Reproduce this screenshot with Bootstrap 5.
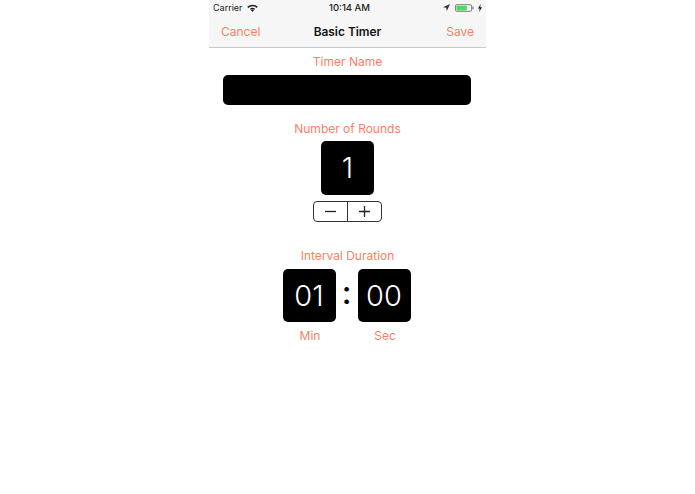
<!DOCTYPE html>
<html lang="en">
<head>
<meta charset="utf-8">
<title>Basic Timer</title>
<link rel="stylesheet" href="https://cdn.jsdelivr.net/npm/bootstrap@5.3.0/dist/css/bootstrap.min.css">
<style>
html,body{height:100%;background:#fff;font-family:Inter,"Liberation Sans",sans-serif;overflow:hidden}
.phone-col{width:277px}
.top-area{background:#f6f6f6;border-bottom:1px solid #c9c9c9;height:48px}
.stat-bar{height:15px;font-size:9px;line-height:15px;padding:0 4px;color:#222}
.stat-side{width:90px}
.stat-wifi{margin-left:0}
.stat-time{font-weight:500;font-size:9.5px;margin-left:4px}
.stat-arrow{margin-right:1px}
.nav-line{height:32px;padding:1px 12px 0;font-size:12px}
.nav-act{color:#fb7f66;width:60px}
.nav-head{color:#111;font-weight:600;font-size:11.9px}
.field-label{color:#fb7f66;font-size:12px;line-height:16px;text-align:center}
.name-box{background:#000;border-radius:5px;height:30px;width:248px}
.num-tile{background:#000;color:#fff;border-radius:5px;width:53px;height:53px;font-size:29px;font-weight:300;line-height:53px;text-align:center}
.tall-tile{height:54px;line-height:54px}
.step-group{width:69px;height:21px;border:1px solid #333;border-radius:4px;background:#fff}
.step-cell{flex:1 1 0;line-height:0}
.step-cell+.step-cell{border-left:1px solid #333}
.sec-a{margin-top:6px}
.sec-b{margin-top:5px}
.sec-c{margin-top:6px}
.sec-t{margin-top:4px}
.sec-n{margin-top:16px}
.sec-d{margin-top:26px}
.sec-e{margin-top:5px}
.nudge-left{margin-right:2px}
.colon-mark{width:22px;color:#000;font-size:32px;font-weight:500;line-height:48px;text-align:center}
.unit-name{width:53px}
.unit-row{margin-top:6px}
.unit-gap{width:22px}
</style>
</head>
<body>
<div class="phone-col mx-auto">
  <div class="top-area">
    <div class="stat-bar d-flex align-items-center justify-content-between">
      <div class="stat-side d-flex align-items-center gap-1">
        <span>Carrier</span>
        <svg class="stat-wifi" width="11" height="8" viewBox="0 0 11 8"><path d="M5.5 8 3.9 6a2.5 2.5 0 0 1 3.2 0Z" fill="#222"/><path d="M2.9 4.8a4 4 0 0 1 5.2 0l-.7.9a3 3 0 0 0-3.8 0Z" fill="#222"/><path d="M.2 2.7a8 8 0 0 1 10.6 0L9.7 4a6 6 0 0 0-8.4 0Z" fill="#222"/></svg>
      </div>
      <span class="stat-time">10:14 AM</span>
      <div class="stat-side d-flex align-items-center justify-content-end gap-1">
        <svg class="stat-arrow" width="7" height="7" viewBox="0 0 8 8"><path d="M8 0 0 3.6l3.7.6.7 3.8Z" fill="#333"/></svg>
        <svg width="19" height="8" viewBox="0 0 20 8"><rect x=".5" y=".5" width="17" height="7" rx="1.5" fill="none" stroke="#777"/><rect x="1.5" y="1.5" width="11" height="5" rx=".7" fill="#4cd964"/><rect x="18.3" y="2.5" width="1.2" height="3" fill="#777"/></svg>
        <svg width="4" height="8" viewBox="0 0 4 8"><path d="M2.6 0 0 4.6h1.6L1.2 8 4 3.3H2.3Z" fill="#222"/></svg>
      </div>
    </div>
    <div class="nav-line d-flex align-items-center justify-content-between">
      <span class="nav-act">Cancel</span>
      <span class="nav-head">Basic Timer</span>
      <span class="nav-act text-end">Save</span>
    </div>
  </div>
  <div class="d-flex flex-column align-items-center">
    <div class="field-label sec-a">Timer Name</div>
    <div class="name-box sec-b nudge-left"></div>
    <div class="field-label sec-n">Number of Rounds</div>
    <div class="num-tile tall-tile sec-t">1</div>
    <div class="step-group d-flex sec-c">
      <div class="step-cell d-flex align-items-center justify-content-center"><svg width="13" height="13" viewBox="0 0 13 13"><path d="M1 6.5h11" stroke="#222" stroke-width="1.3"/></svg></div>
      <div class="step-cell d-flex align-items-center justify-content-center"><svg width="13" height="13" viewBox="0 0 13 13"><path d="M1 6.5h11M6.5 1v11" stroke="#222" stroke-width="1.3"/></svg></div>
    </div>
    <div class="field-label sec-d">Interval Duration</div>
    <div class="d-flex sec-e nudge-left">
      <div class="num-tile">01</div>
      <div class="colon-mark">:</div>
      <div class="num-tile">00</div>
    </div>
    <div class="d-flex unit-row">
      <div class="field-label unit-name">Min</div>
      <div class="unit-gap"></div>
      <div class="field-label unit-name">Sec</div>
    </div>
  </div>
</div>
<script src="https://cdn.jsdelivr.net/npm/bootstrap@5.3.0/dist/js/bootstrap.bundle.min.js"></script>
</body>
</html>
